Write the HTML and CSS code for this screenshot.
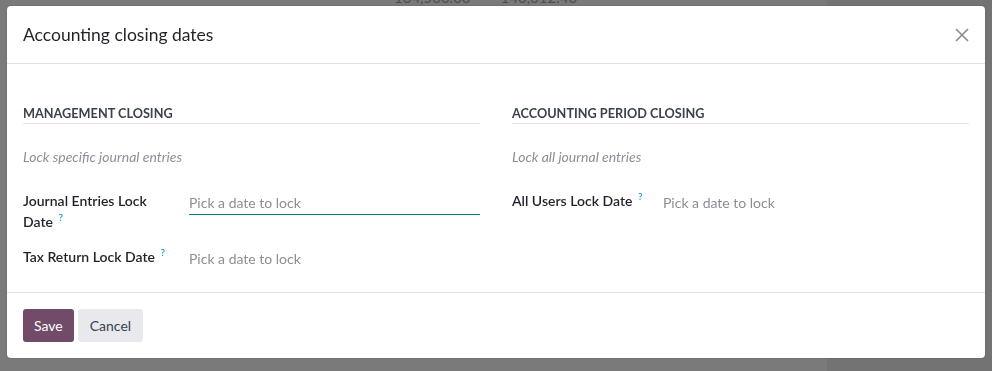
FILE: index.html
```html
<!DOCTYPE html>
<html lang="en">
<head>
    <meta charset="UTF-8">
    <title>Accounting closing dates</title>
    <link rel="stylesheet" href="styles.css">
</head>
<body>
<div class="backdrop">
    <div class="page-table">
        <div class="page-row">
            <span class="cell">134,500.00</span>
            <span class="cell">140,612.40</span>
        </div>
    </div>
    <div class="page-side"></div>
</div>

<div class="modal">
    <header class="modal-header">
        <h4 class="modal-title">Accounting closing dates</h4>
        <button class="btn-close" type="button" aria-label="Close">
            <svg width="14" height="14" viewBox="0 0 14 14">
                <path d="M1 1L13 13M13 1L1 13" stroke="#8a8a8a" stroke-width="1.6" fill="none"/>
            </svg>
        </button>
    </header>

    <main class="modal-body">
        <div class="group">
            <div class="col">
                <div class="separator">Management Closing</div>
                <div class="hint">Lock specific journal entries</div>
                <div class="inner-group left">
                    <label class="label">Journal Entries Lock Date <sup class="help">?</sup></label>
                    <input class="field focused" placeholder="Pick a date to lock"/>
                    <label class="label">Tax Return Lock Date <sup class="help">?</sup></label>
                    <input class="field" placeholder="Pick a date to lock"/>
                </div>
            </div>
            <div class="col">
                <div class="separator">Accounting Period Closing</div>
                <div class="hint">Lock all journal entries</div>
                <div class="inner-group right">
                    <label class="label">All Users Lock Date <sup class="help">?</sup></label>
                    <input class="field" placeholder="Pick a date to lock"/>
                </div>
            </div>
        </div>
    </main>

    <footer class="modal-footer">
        <button class="btn btn-primary" type="button">Save</button>
        <button class="btn btn-secondary" type="button">Cancel</button>
    </footer>
</div>
</body>
</html>
```

FILE: styles.css
```css
* {
    box-sizing: border-box;
    margin: 0;
    padding: 0;
}

body {
    font-family: Lato, "Noto Sans", sans-serif;
    font-size: 14px;
    line-height: 21px;
    color: #1f2329;
    background: #747474;
    height: 371px;
    overflow: hidden;
}

/* page behind the dialog */
.backdrop {
    display: flex;
    height: 100%;
}

.page-table {
    width: 827px;
    background: #7a7a7a;
}

.page-side {
    flex: 1;
    background: #737373;
}

.page-row {
    display: flex;
    gap: 30px;
    padding-left: 394px;
    margin-top: -13px;
    color: #4e4e4e;
    font-size: 15px;
}

/* dialog */
.modal {
    position: fixed;
    left: 7px;
    top: 6px;
    width: 978px;
    height: 352px;
    background: #fff;
    border-radius: 4px;
    display: flex;
    flex-direction: column;
    box-shadow: 0 0 2px rgba(0, 0, 0, 0.2);
}

.modal-header {
    height: 58px;
    display: flex;
    align-items: center;
    justify-content: space-between;
    padding: 0 16px;
    border-bottom: 1px solid #dee2e6;
}

.modal-title {
    font-size: 17.5px;
    font-weight: 400;
    color: #1f2329;
}

.btn-close {
    border: none;
    background: none;
    width: 14px;
    height: 14px;
    display: flex;
    cursor: pointer;
}

.modal-body {
    height: 229px;
    padding: 0 16px;
    border-bottom: 1px solid #dee2e6;
}

.group {
    display: grid;
    grid-template-columns: 1fr 1fr;
    gap: 32px;
}

.separator {
    margin-top: 38px;
    padding-top: 2px;
    line-height: 19px;
    font-size: 12.7px;
    font-weight: 700;
    text-transform: uppercase;
    color: #3b414e;
    border-bottom: 1px solid #e3e5e8;
}

.hint {
    margin-top: 22px;
    font-style: italic;
    color: #8b9099;
}

.inner-group {
    display: grid;
    row-gap: 14px;
    margin-top: 23px;
    align-items: start;
}

.inner-group.left {
    grid-template-columns: 166px 1fr;
}

.inner-group.right {
    grid-template-columns: 151px 1fr;
}

.label {
    font-weight: 600;
    color: #1f2329;
    padding-right: 14px;
}

.help {
    color: #17a2b8;
    font-size: 10px;
    font-weight: 600;
    line-height: 1;
    vertical-align: top;
    position: relative;
    top: 1px;
    margin-left: 2px;
}

.field {
    font: inherit;
    border: none;
    border-bottom: 1px solid transparent;
    padding: 2px 0 1px;
    line-height: 21px;
    outline: none;
    width: 100%;
    color: #1f2329;
}

.field::placeholder {
    color: #8b8f95;
}

.field.focused {
    border-bottom-color: #017e84;
}

.modal-footer {
    display: flex;
    gap: 4px;
    padding: 16px;
}

.btn {
    font: inherit;
    border: none;
    border-radius: 3px;
    height: 33px;
    padding: 0 11px;
    cursor: pointer;
}

.btn-primary {
    background: #714b67;
    color: #fff;
}

.btn-secondary {
    background: #e7e9ed;
    color: #374151;
    padding: 0 12px;
}
```
